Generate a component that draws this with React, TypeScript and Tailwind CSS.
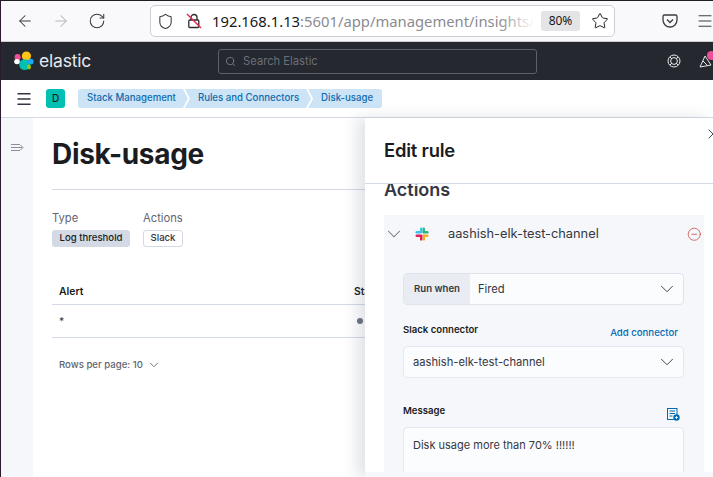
import React from 'react';
import { ArrowLeft, ArrowRight, RotateCw, Shield, Star, Menu, Search, ChevronDown, MinusCircle, X } from 'lucide-react';

const ElasticLogo = () => (
  <svg width="20" height="20" viewBox="0 0 20 20">
    <circle cx="12.4" cy="5" r="4.6" fill="#FEC514" />
    <circle cx="10.6" cy="13.6" r="5.4" fill="#00BFB3" />
    <ellipse cx="3.6" cy="6.2" rx="3" ry="3.2" fill="#F04E98" />
    <ellipse cx="3" cy="10.6" rx="2.8" ry="2.6" fill="#ffffff" />
    <ellipse cx="16.8" cy="10.6" rx="2.8" ry="2.9" fill="#1BA9F5" />
    <ellipse cx="15" cy="16" rx="2" ry="2.4" fill="#93C90E" />
  </svg>
);

const SlackLogo = () => (
  <svg width="14" height="14" viewBox="0 0 14 14">
    <rect x="5" y="0.5" width="2.4" height="5.8" rx="1.2" fill="#36C5F0" />
    <rect x="0.5" y="4" width="5.8" height="2.4" rx="1.2" fill="#36C5F0" />
    <rect x="7.6" y="0.5" width="2.4" height="5.8" rx="1.2" fill="#2EB67D" />
    <rect x="7.6" y="4" width="6" height="2.4" rx="1.2" fill="#2EB67D" />
    <rect x="7.6" y="7.6" width="2.4" height="6" rx="1.2" fill="#ECB22E" />
    <rect x="7.6" y="7.6" width="6" height="2.4" rx="1.2" fill="#ECB22E" />
    <rect x="5" y="7.6" width="2.4" height="6" rx="1.2" fill="#E01E5A" />
    <rect x="0.5" y="7.6" width="5.8" height="2.4" rx="1.2" fill="#E01E5A" />
  </svg>
);

const Crumb = ({ label, first, last }: { label: string; first?: boolean; last?: boolean }) => (
  <div
    className={`flex h-[19px] items-center bg-[#cce4f5] text-[9.65px] font-medium text-[#0f6bb0] ${first ? 'rounded-l-[3px] pl-[9px]' : '-ml-[3px] pl-[13px]'} ${last ? 'rounded-r-[3px] pr-[9px]' : 'pr-[12px]'}`}
    style={{
      clipPath: last
        ? 'polygon(0 0, 100% 0, 100% 100%, 0 100%, 5px 50%)'
        : first
          ? 'polygon(0 0, calc(100% - 5px) 0, 100% 50%, calc(100% - 5px) 100%, 0 100%)'
          : 'polygon(0 0, calc(100% - 5px) 0, 100% 50%, calc(100% - 5px) 100%, 0 100%, 5px 50%)',
    }}
  >
    {label}
  </div>
);

export default function App() {
  return (
    <div className="flex h-[477px] w-[713px] flex-col overflow-hidden border-l border-[#2c1a2e] bg-white font-['Inter',sans-serif]">
      {/* browser toolbar */}
      <div className="h-px shrink-0 bg-[#1f1f22]" />
      <div className="flex h-[41px] shrink-0 items-center border-b border-[#cfcfd2] bg-[#f9f9fb] text-[#3b3b40]">
        <ArrowLeft size={18} strokeWidth={1.4} className="ml-[15px] shrink-0" />
        <ArrowRight size={18} strokeWidth={1.4} className="ml-[18px] shrink-0 text-[#b5b5b8]" />
        <RotateCw size={18} strokeWidth={1.4} className="ml-[18px] shrink-0" />
        <div className="ml-[44px] flex h-[32px] w-[465px] shrink-0 items-center rounded-[5px] border border-[#cfcfd3] bg-white">
          <Shield size={17} strokeWidth={1.5} className="ml-[6px] shrink-0" />
          <svg width="16" height="16" viewBox="0 0 16 16" className="ml-[12px] shrink-0" fill="none">
            <rect x="2.8" y="7" width="10" height="7.5" rx="1" stroke="#2d2d32" strokeWidth="1.3" />
            <path d="M5 7V4.5a3 3 0 0 1 6 0V7" stroke="#2d2d32" strokeWidth="1.3" />
            <path d="M1 1l14 14" stroke="#e22850" strokeWidth="1.4" />
          </svg>
          <div className="relative ml-[10px] w-[323px] shrink-0 overflow-hidden text-[14.8px] whitespace-nowrap font-['Noto_Sans',sans-serif] text-[#8b8b90]">
            <span className="text-[#17171a]">192.168.1.13</span>:5601/app/management/insights/
            <div className="absolute inset-y-0 right-0 w-[36px] bg-gradient-to-r from-transparent to-white" />
          </div>
          <div className="ml-[6px] flex h-[20px] w-[39px] shrink-0 items-center justify-center rounded-[3px] bg-[#e4e4e6] font-['Noto_Sans',sans-serif] text-[12px] text-[#17171a]">
            80%
          </div>
          <Star size={18} strokeWidth={1.3} className="ml-[11px] shrink-0 text-[#1c1c20]" />
        </div>
        <svg width="16" height="16" viewBox="0 0 16 16" fill="none" className="ml-[47px] shrink-0" stroke="#3b3b40" strokeWidth="1.3">
          <path d="M2.5 2h11a1.5 1.5 0 0 1 1.5 1.5V7a7 7 0 0 1-14 0V3.500A1.500 1.500 0 0 1 2.500 2z" />
          <path d="M5 6.500L8 9.500L11 6.500" />
        </svg>
        <Menu size={18} strokeWidth={1.3} className="ml-[18px] shrink-0" />
      </div>

      {/* kibana header */}
      <div className="flex h-[38px] shrink-0 items-center bg-[#25282f]">
        <div className="ml-[13px]"><ElasticLogo /></div>
        <span className="ml-[5px] text-[17.5px] leading-none tracking-[-0.2px] text-[#e6e8ed] font-['Inter',sans-serif]">elastic</span>
        <div className="ml-[127px] flex h-[25px] w-[320px] items-center rounded-[3px] border border-[#5e6168] bg-[#25282f]">
          <Search size={11} className="ml-[6px] text-[#7a7d85]" />
          <span className="ml-[7px] text-[11.2px] text-[#6c6f77]">Search Elastic</span>
        </div>
        <svg width="14" height="14" viewBox="0 0 14 14" fill="none" stroke="#e6e8ed" strokeWidth="1" className="ml-[130px] shrink-0">
          <circle cx="7" cy="7" r="6" />
          <circle cx="7" cy="7" r="3.400" />
          <path d="M3 3l2 2M11 3L9 5M3 11l2-2M11 11L9 9" />
        </svg>
        <div className="relative ml-[18px] h-[14px] w-[14px] shrink-0">
          <svg width="14" height="14" viewBox="0 0 14 14" fill="none" stroke="#e6e8ed" strokeWidth="1">
            <path d="M1 13L6 2l6 9z" />
            <path d="M4 7l4 4" />
          </svg>
          <div className="absolute -top-[3px] left-[8px] h-[9px] w-[9px] rounded-full bg-[#f04e98]" />
        </div>
      </div>

      {/* breadcrumbs */}
      <div className="flex h-[38px] shrink-0 items-center border-b border-[#d3dae6] bg-white">
        <Menu size={18} strokeWidth={2} className="ml-[14px] text-[#343741]" />
        <div className="ml-[13px] flex h-[19px] w-[19px] items-center justify-center rounded-[3px] bg-[#00bfb3] text-[10px] font-medium text-[#1a1c21]">
          D
        </div>
        <div className="ml-[13px] flex">
          <Crumb label="Stack Management" first />
          <Crumb label="Rules and Connectors" />
          <Crumb label="Disk-usage" last />
        </div>
      </div>

      <div className="flex min-h-0 flex-1">
        {/* collapsed side nav */}
        <div className="flex w-[32px] shrink-0 justify-center bg-[#f5f7fa] pt-[25px]">
          <svg width="13" height="10" viewBox="0 0 13 10" fill="none" stroke="#8a8e96" strokeWidth="1">
            <path d="M0 1.500h9M0 4.500h11M0 7.500h9M9.500 2l2.500 2.500L9.500 7" />
          </svg>
        </div>

        {/* rule details page */}
        <div className="w-[332px] shrink-0 overflow-hidden bg-white pl-[19px]">
          <h1 className="mt-[17px] text-[28px] leading-[38px] font-bold tracking-[-0.3px] text-[#1a1c21]">Disk-usage</h1>
          <div className="mt-[16px] h-px bg-[#d3dae6]" />
          <div className="mt-[21px] flex gap-[13px]">
            <div>
              <div className="text-[11.2px] leading-[14px] text-[#5f6571]">Type</div>
              <div className="mt-[5px] flex h-[17px] items-center rounded-[3px] bg-[#d3dae6] px-[7.5px] text-[9.6px] font-medium text-[#1a1c21]">Log threshold</div>
            </div>
            <div>
              <div className="text-[11.2px] leading-[14px] text-[#5f6571]">Actions</div>
              <div className="mt-[5px] flex h-[17px] items-center rounded-[3px] border border-[#d3dae6] px-[6.5px] text-[9.6px] font-medium text-[#343741]">Slack</div>
            </div>
          </div>
          <div className="mt-[33px] flex h-[25px] items-center border-b border-[#d3dae6] pl-[7px] text-[10.4px] font-semibold text-[#1a1c21]">
            <span className="w-[295px] shrink-0">Alert</span>
            <span className="shrink-0">Status</span>
          </div>
          <div className="flex h-[33px] items-center border-b border-[#d3dae6] pl-[7px] text-[10.4px] text-[#343741]">
            <span className="w-[298px] shrink-0 pt-[1px]">*</span>
            <span className="h-[6px] w-[6px] shrink-0 rounded-full bg-[#69707d]" />
          </div>
          <div className="mt-[20px] flex items-center pl-[7px] text-[9.6px] font-medium text-[#5f6571]">
            Rows per page: 10
            <ChevronDown size={14} strokeWidth={1.5} className="ml-[4px]" />
          </div>
        </div>

        {/* edit rule flyout */}
        <div className="relative flex min-w-0 flex-1 flex-col bg-white shadow-[-8px_0_14px_rgba(90,100,120,0.18)]">
          <X size={16} strokeWidth={1.4} className="absolute top-[8px] -right-[8px] text-[#343741]" />
          <div className="flex h-[66px] shrink-0 items-center border-b border-[#d3dae6] pl-[19px] text-[18.4px] font-semibold tracking-[-0.2px] text-[#1a1c21]">
            Edit rule
          </div>
          <div className="min-h-0 flex-1 overflow-hidden pl-[19px] pr-[9px]">
            <div className="-mt-[4px] text-[18px] leading-[20px] font-semibold text-[#343741]">Actions</div>
            <div className="mt-[15px] h-[300px] bg-[#f5f7fa] pr-[20px] pl-[19px]">
              <div className="-mr-[20px] -ml-[19px] flex h-[38px] items-center">
                <ChevronDown size={22} strokeWidth={1.1} className="-ml-[1px] text-[#69707d]" />
                <div className="ml-[10px]"><SlackLogo /></div>
                <span className="ml-[19px] text-[12.8px] font-normal text-[#343741]">aashish-elk-test-channel</span>
                <MinusCircle size={14.5} strokeWidth={1.3} className="mr-[3px] ml-auto text-[#cf4a42]" />
              </div>
              <div className="mt-[20px] flex h-[32px] items-center overflow-hidden rounded-[4px] border border-[#dfe3ec] bg-[#fbfcfd]">
                <div className="flex h-full w-[66px] items-center justify-center bg-[#e9edf3] text-[9.6px] font-semibold text-[#343741]">Run when</div>
                <span className="ml-[8px] text-[11.2px] text-[#343741]">Fired</span>
                <ChevronDown size={22} strokeWidth={1} className="mr-[5px] ml-auto text-[#343741]" />
              </div>
              <div className="mt-[16px] flex h-[19px] items-center justify-between pr-[6px] text-[9.6px]">
                <span className="font-semibold text-[#1a1c21]">Slack connector</span>
                <span className="mt-[6px] font-medium text-[#006bb4]">Add connector</span>
              </div>
              <div className="mt-[6px] flex h-[32px] items-center rounded-[4px] border border-[#e4e7ef] bg-[#fbfcfd] pl-[9px]">
                <span className="text-[11.2px] text-[#343741]">aashish-elk-test-channel</span>
                <ChevronDown size={22} strokeWidth={1} className="mr-[5px] ml-auto text-[#343741]" />
              </div>
              <div className="mt-[24px] flex h-[19px] items-center justify-between pr-[4px] text-[9.6px] font-semibold text-[#1a1c21]">
                <span>Message</span>
                <svg width="13" height="13" viewBox="0 0 13 13" className="mt-[6px]">
                  <rect x="0.500" y="0.500" width="9.500" height="11" fill="none" stroke="#006bb4" strokeWidth="1" />
                  <path d="M2.500 3h5.500M2.500 5.500h5.500M2.500 8h3" stroke="#006bb4" strokeWidth="1" />
                  <circle cx="9.500" cy="9.500" r="3.200" fill="#006bb4" />
                  <path d="M9.500 8v3M8 9.500h3" stroke="#fff" strokeWidth="0.800" />
                </svg>
              </div>
              <div className="mt-[6px] h-[90px] rounded-[4px] border border-[#e4e7ef] bg-[#fbfcfd] px-[9px] pt-[9px] text-[11px] text-[#343741]">
                Disk usage more than 70% !!!!!!
              </div>
            </div>
          </div>
          <div className="h-[5px] shrink-0 bg-[#f5f7fa]" />
        </div>
      </div>
    </div>
  );
}
